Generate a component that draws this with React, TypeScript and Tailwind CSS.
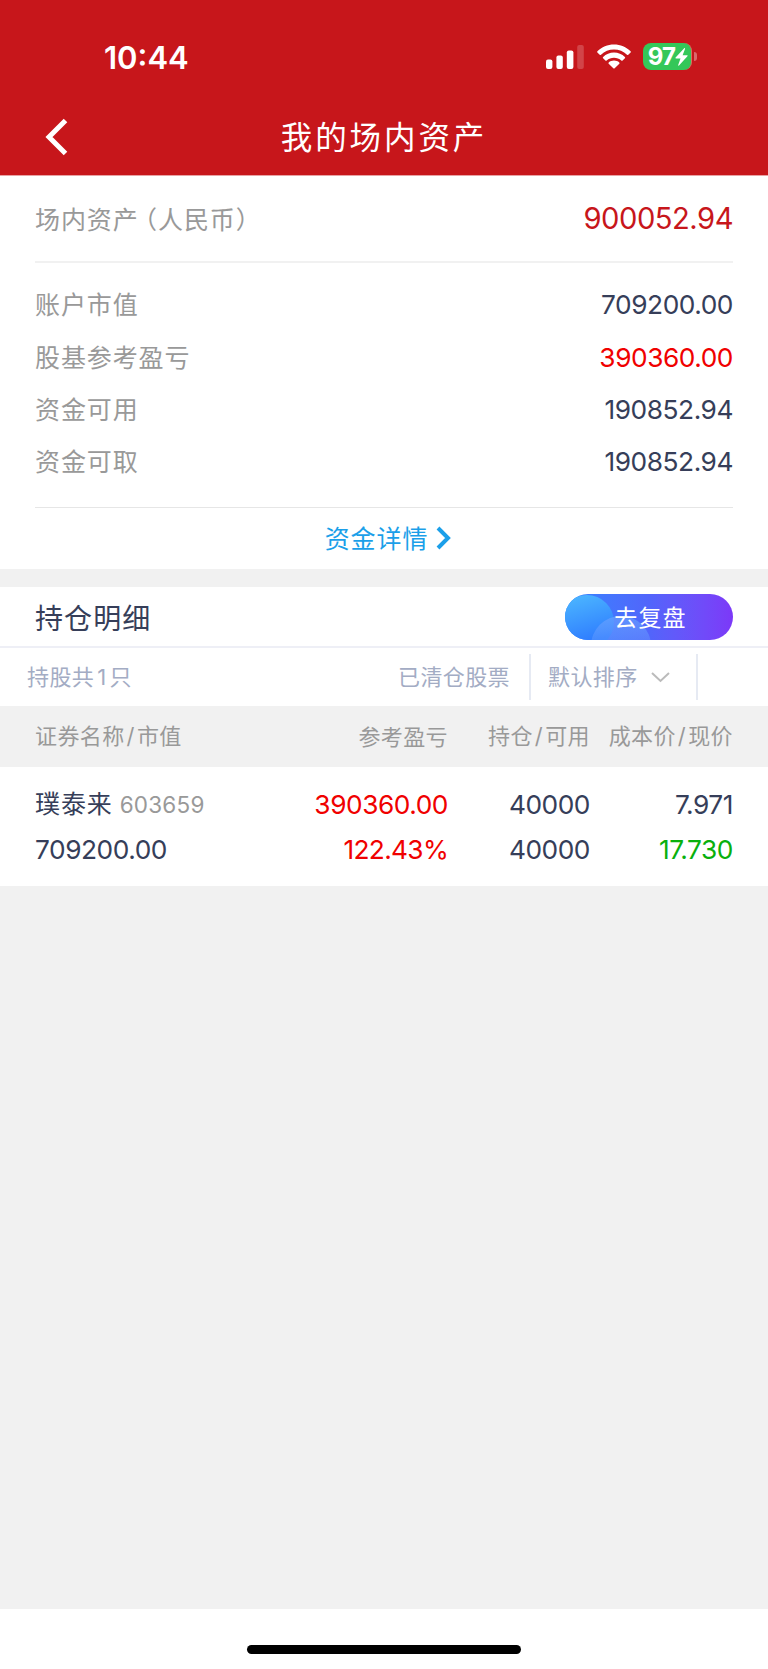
const summaryRows = [
  { label: "账户市值", value: "709200.00", color: "text-[#363e59]" },
  { label: "股基参考盈亏", value: "390360.00", color: "text-[#f00000]" },
  { label: "资金可用", value: "190852.94", color: "text-[#363e59]" },
  { label: "资金可取", value: "190852.94", color: "text-[#363e59]" },
];

function StatusBar() {
  return (
    <div className="flex h-[114px] items-start justify-between pl-[104px] pr-[71px] pt-[39px] text-white">
      <span className="font-['Inter',sans-serif] text-[31px] font-semibold leading-[37px]">
        10:44
      </span>
      <div className="flex items-center pt-1">
        <svg width="38" height="25" viewBox="0 0 38 25" fill="currentColor">
          <rect x="0" y="15.5" width="6.4" height="9.5" rx="2" />
          <rect x="10.4" y="11.5" width="6.4" height="13.5" rx="2" />
          <rect x="20.8" y="6.5" width="6.6" height="18.5" rx="2" />
          <rect x="31.2" y="1" width="6.6" height="24" rx="2" opacity="0.2" />
        </svg>
        <svg className="ml-[13px]" width="34" height="25" viewBox="0 0 34 25" fill="currentColor">
          <path d="M17 0.5C23.4 0.5 29.3 3 33.6 7.2C34 7.6 34 8.1 33.6 8.5L31.3 10.8C30.9 11.2 30.4 11.2 30 10.8C26.5 7.5 22 5.6 17 5.6C12 5.6 7.5 7.5 4 10.8C3.6 11.2 3.1 11.2 2.7 10.8L0.4 8.5C0 8.1 0 7.6 0.4 7.2C4.7 3 10.6 0.5 17 0.5Z" />
          <path d="M17 8.6C21.2 8.6 25 10.2 27.9 12.9C28.3 13.3 28.3 13.8 27.9 14.2L25.6 16.4C25.2 16.8 24.7 16.8 24.3 16.5C22.3 14.7 19.8 13.7 17 13.7C14.2 13.7 11.7 14.7 9.7 16.5C9.3 16.8 8.8 16.8 8.4 16.4L6.1 14.2C5.7 13.8 5.7 13.3 6.1 12.9C9 10.2 12.8 8.6 17 8.6Z" />
          <path d="M17 16.6C19 16.6 20.9 17.3 22.3 18.5C22.7 18.9 22.7 19.4 22.3 19.8L17.7 24.3C17.3 24.7 16.7 24.7 16.3 24.3L11.7 19.8C11.3 19.4 11.3 18.9 11.7 18.5C13.1 17.3 15 16.6 17 16.6Z" />
        </svg>
        <div className="ml-3 flex h-[27px] w-[49px] items-center justify-center rounded-[8px] border-r border-[#dd6b62] bg-[#34c759] pl-[2px]">
          <span className="font-['Inter',sans-serif] text-[24px] font-bold leading-none tracking-[-0.8px]">
            97
          </span>
          <svg width="13" height="18" viewBox="0 0 13 18" fill="currentColor">
            <path d="M9.2 0.3L0.6 9.6C0.2 10.1 0.4 10.5 1 10.5H5.5L3.2 17C3 17.7 3.5 17.9 4 17.5L12.4 8.2C12.8 7.7 12.6 7.3 12 7.3H7.6L10 0.9C10.2 0.2 9.7 -0.2 9.2 0.3Z" />
          </svg>
        </div>
        <div className="ml-[2px] h-[9px] w-[3px] rounded-r-full bg-white/35" />
      </div>
    </div>
  );
}

function NavBar() {
  return (
    <div className="grid h-[61px] grid-cols-[68px_1fr_68px] items-start text-white">
      <svg className="ml-[45px] mt-[4px]" width="23" height="38" viewBox="0 0 23 38" fill="none">
        <path d="M20.5 2.5L4 19L20.5 35.5" stroke="currentColor" strokeWidth="5" />
      </svg>
      <h1 className="text-center text-[31.5px] leading-[42px] tracking-[2.9px]">
        我的场内资产
      </h1>
    </div>
  );
}

function Summary() {
  return (
    <section className="h-[394px] border-t border-[#e8a2a4] bg-white px-[35px]">
      <div className="flex h-[87px] items-center justify-between border-b-2 border-[#f1f1f1]">
        <span className="text-[25px] tracking-[0.9px] text-[#999]">
          场内资产
          <span className="pl-[6px] [font-feature-settings:'halt']">（</span>
          人民币
          <span className="[font-feature-settings:'halt']">）</span>
        </span>
        <span className="pt-[1px] font-['Inter',sans-serif] text-[29.2px] tracking-[-0.5px] text-[#c7161b]">
          900052.94
        </span>
      </div>
      <div className="flex h-[245px] flex-col border-b border-[#e6e6e6] pt-[16px]">
        {summaryRows.map((row) => (
          <div key={row.label} className="flex h-[52.3px] items-center justify-between">
            <span className="pb-[2px] text-[25px] tracking-[0.9px] text-[#999]">{row.label}</span>
            <span className={`font-['Inter',sans-serif] text-[26.3px] tracking-[-0.45px] ${row.color}`}>
              {row.value}
            </span>
          </div>
        ))}
      </div>
      <button className="flex h-[60px] w-full items-center justify-center pl-[8px] text-[25px] leading-[60px] tracking-[0.9px] text-[#1b9fe9]">
        <span className="pb-[2px]">资金详情</span>
        <svg className="ml-2" width="15" height="24" viewBox="0 0 15 24" fill="none">
          <path d="M2 2L12 12L2 22" stroke="currentColor" strokeWidth="4" />
        </svg>
      </button>
    </section>
  );
}

function ReviewButton() {
  return (
    <button className="relative h-[46px] w-[168px] overflow-hidden rounded-full bg-linear-to-r from-[#2f86ff] via-[#5165fb] to-[#7c38f8] text-[23px] tracking-[1.2px] text-white">
      <svg className="absolute left-0 top-0" width="168" height="46" viewBox="0 0 168 46">
        <defs>
          <linearGradient id="bubble" x1="0.3" y1="0" x2="0.6" y2="1">
            <stop offset="0" stopColor="#4bb5ff" />
            <stop offset="0.85" stopColor="#2f7dff" />
          </linearGradient>
          <linearGradient id="bubbleSoft" x1="0" y1="0" x2="0" y2="1">
            <stop offset="0" stopColor="#6aa0ff" stopOpacity="0.7" />
            <stop offset="0.5" stopColor="#6aa0ff" stopOpacity="0.3" />
          </linearGradient>
        </defs>
        <circle cx="22" cy="28" r="27" fill="url(#bubble)" />
        <circle cx="56" cy="52" r="30" fill="url(#bubbleSoft)" />
      </svg>
      <span className="relative pl-[3px]">去复盘</span>
    </button>
  );
}

function Slash() {
  return <span className="mx-[2px] font-['Inter',sans-serif]">/</span>;
}

function Holdings() {
  return (
    <section className="mt-[18px] bg-white">
      <div className="flex h-[61px] items-center justify-between border-b-2 border-[#eeeff6] px-[35px]">
        <h2 className="text-[28px] tracking-[1.1px] text-[#363e59]">持仓明细</h2>
        <ReviewButton />
      </div>

      <div className="flex h-[58px] items-center text-[22px] leading-[32px] tracking-[0.4px] text-[#a3acc4]">
        <span className="pb-[2px] pl-[27px]">
          持股共<span className="mx-[3px] font-['Inter',sans-serif]">1</span>只
        </span>
        <span className="ml-auto pb-[4px] pr-[19px]">已清仓股票</span>
        <div className="flex h-[46px] w-[169px] items-center border-x-2 border-[#e6eaf3] pl-[17px]">
          <span className="pb-[4px]">默认排序</span>
          <svg className="ml-[13px]" width="19" height="11" viewBox="0 0 19 11" fill="none">
            <path d="M1 1L9.5 9L18 1" stroke="#bbb" strokeWidth="2" />
          </svg>
        </div>
        <div className="w-[70px]" />
      </div>

      <div className="grid h-[61px] grid-cols-[1fr_180px_142px_143px] items-center bg-[#f1f1f1] px-[35px] pb-[3px] text-right text-[22px] leading-[32px] tracking-[0.4px] text-[#999]">
        <span className="text-left">
          证券名称<Slash />市值
        </span>
        <span className="pb-[1px]">参考盈亏</span>
        <span>
          持仓<Slash />可用
        </span>
        <span>
          成本价<Slash />现价
        </span>
      </div>

      <div className="grid h-[119px] grid-cols-[1fr_180px_142px_143px] grid-rows-[45px_45px] content-start items-center px-[35px] pt-[15px] text-right font-['Inter','Noto_Sans_CJK_SC',sans-serif] text-[26.3px] tracking-[-0.45px] text-[#363e59]">
        <span className="flex items-center text-left">
          <span className="text-[25px] tracking-[0.9px]">璞泰来</span>
          <span className="ml-[7px] text-[22.5px] tracking-[0.2px] text-[#999]">603659</span>
        </span>
        <span className="text-[#f00000]">390360.00</span>
        <span>40000</span>
        <span>7.971</span>
        <span className="text-left">709200.00</span>
        <span className="text-[#f00000] tracking-[-0.7px]">122.43%</span>
        <span>40000</span>
        <span className="text-[#09b00d]">17.730</span>
      </div>
    </section>
  );
}

export default function App() {
  return (
    <div className="flex h-[1669px] w-[768px] flex-col bg-[#f1f1f1] font-['Noto_Sans_CJK_SC',sans-serif]">
      <header className="bg-[#c7161b]">
        <StatusBar />
        <NavBar />
      </header>
      <Summary />
      <Holdings />
      <footer className="mt-auto flex h-[60px] justify-center bg-white pt-[36px]">
        <div className="h-[9px] w-[274px] rounded-full bg-black" />
      </footer>
    </div>
  );
}
